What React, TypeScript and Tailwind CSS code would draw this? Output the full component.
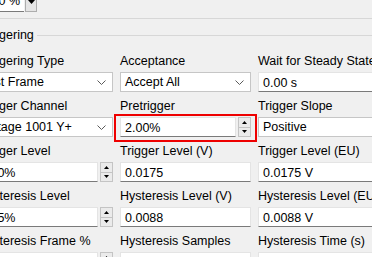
import type { ReactNode } from "react"

const Chevron = () => (
  <svg width="9" height="5" viewBox="0 0 9 5" className="shrink-0">
    <polyline points="0.5,0.5 4.5,4.5 8.5,0.5" fill="none" stroke="#5a5a5a" strokeWidth="1" />
  </svg>
)

const Tri = ({ up }: { up?: boolean }) => (
  <svg width="5" height="3" viewBox="0 0 5 3">
    <polygon points={up ? "0,3 5,3 2.5,0" : "0,0 5,0 2.5,3"} fill="#000" />
  </svg>
)

function Combo({ value }: { value: string }) {
  return (
    <div className="flex h-[20px] items-center justify-between border border-[#c6c6c6] bg-white pr-[6px] pl-[4px]">
      <span className="whitespace-nowrap">{value}</span>
      <Chevron />
    </div>
  )
}

function TextBox({ value }: { value: string }) {
  return (
    <div className="flex h-[20px] items-center overflow-hidden whitespace-nowrap border border-[#e4e4e4] border-b-[#7a7a7a] bg-white px-[4px] pt-[2px]">
      {value}
    </div>
  )
}

function Spin({ value }: { value: string }) {
  return (
    <div className="flex h-[20px] gap-[2px]">
      <div className="flex flex-1 items-center overflow-hidden whitespace-nowrap border border-[#e4e4e4] border-b-[#7a7a7a] bg-white px-[4px] pt-[2px]">
        {value}
      </div>
      <div className="flex w-[13px] flex-col border border-[#c4c4c4] bg-[#ebebeb]">
        <div className="flex flex-1 items-center justify-center border-b border-[#c4c4c4]">
          <Tri up />
        </div>
        <div className="flex flex-1 items-center justify-center">
          <Tri />
        </div>
      </div>
    </div>
  )
}

function Field({ label, first, children }: { label: string; first?: boolean; children: ReactNode }) {
  return (
    <div className="flex min-w-0 flex-col">
      <div className={`h-[14px] whitespace-nowrap leading-[14px] ${first ? "pl-[3px]" : ""}`}>{label}</div>
      <div className="mt-[4px]">{children}</div>
    </div>
  )
}

export default function App() {
  return (
    <div className="h-[257px] w-[372px] overflow-hidden bg-[#f0f0f0] font-['Liberation_Sans',Arial,sans-serif] text-[12.5px] text-black">
      {/* tail of the section above */}
      <div className="-mt-[9px] -ml-[40px] flex h-[21px] gap-[1px]">
        <div className="flex w-[64px] items-center justify-end border-b border-[#7a7a7a] bg-white pr-[4px]">100 %</div>
        <div className="flex w-[12px] items-center justify-center border border-[#adadad] bg-[#e5e5e5]">
          <svg width="7" height="4" viewBox="0 0 7 4">
            <polygon points="0,0 7,0 3.5,4" fill="#000" />
          </svg>
        </div>
      </div>
      <div className="mt-[6px] h-px bg-[#d7d7d7]" />

      <div className="-ml-[22px] mt-[9px] flex items-center gap-[3px]">
        <span className="h-[14px] leading-[14px]">Triggering</span>
        <div className="h-px flex-1 bg-[#d7d7d7]" />
      </div>

      <div className="-ml-[25px] mt-[12px] grid grid-cols-[138px_131px_131px] gap-x-[7px] gap-y-[7px]">
        <Field label="Triggering Type" first>
          <Combo value="First Frame" />
        </Field>
        <Field label="Acceptance">
          <Combo value="Accept All" />
        </Field>
        <Field label="Wait for Steady State">
          <TextBox value="0.00 s" />
        </Field>

        <Field label="Trigger Channel" first>
          <Combo value="Voltage 1001 Y+" />
        </Field>
        <Field label="Pretrigger">
          <div className="relative">
            <Spin value="2.00%" />
            <div className="absolute -top-[3px] -right-[6px] -bottom-[5px] -left-[6px] border-2 border-[#ee0000]" />
          </div>
        </Field>
        <Field label="Trigger Slope">
          <Combo value="Positive" />
        </Field>

        <Field label="Trigger Level" first>
          <Spin value="35.0%" />
        </Field>
        <Field label="Trigger Level (V)">
          <TextBox value="0.0175" />
        </Field>
        <Field label="Trigger Level (EU)">
          <TextBox value="0.0175 V" />
        </Field>

        <Field label="Hysteresis Level" first>
          <Spin value="17.5%" />
        </Field>
        <Field label="Hysteresis Level (V)">
          <TextBox value="0.0088" />
        </Field>
        <Field label="Hysteresis Level (EU)">
          <TextBox value="0.0088 V" />
        </Field>

        <Field label="Hysteresis Frame %" first>
          <Spin value="50.0%" />
        </Field>
        <Field label="Hysteresis Samples">
          <TextBox value="0" />
        </Field>
        <Field label="Hysteresis Time (s)">
          <TextBox value="0.000" />
        </Field>
      </div>
    </div>
  )
}
